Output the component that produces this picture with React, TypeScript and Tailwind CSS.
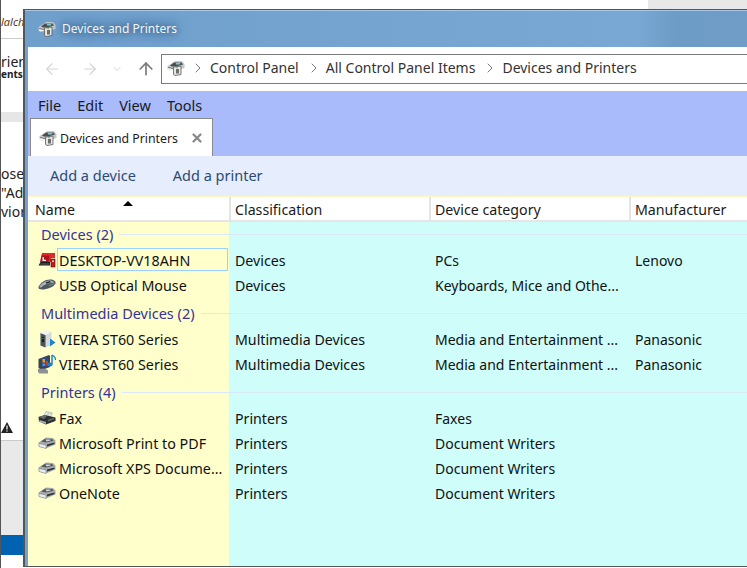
import { ArrowLeft, ArrowRight, ArrowUp, ChevronDown, ChevronRight, X } from "lucide-react";
import type { ReactNode } from "react";

const font = { fontFamily: '"Noto Sans", "Open Sans", sans-serif' };

function DevicesIcon({ className }: { className?: string }) {
  return (
    <svg viewBox="0 0 18 16" className={className}>
      <path d="M0.5 6 L6 2.5 L8 1 L15 1 L17.5 4 L17.5 8 L14 9 L6 10 L2 10.5 L0.5 9 Z" fill="#c4c8ca" />
      <path d="M3 5.5 L7 2.5 L14.5 2.5 L16 4.5 L9 6.5 L5 6.5 Z" fill="#4a4e51" />
      <path d="M8.5 2.8 L13 2.8 L13.5 4.2 L9.5 4.8 Z" fill="#7fc6cc" />
      <path d="M1 7.5 L6 8.5 L6 10 L2 10.5 L1 9.5 Z" fill="#f0f1f1" />
      <path d="M1 7.5 L6 8.5" stroke="#55595c" strokeWidth="0.8" />
      <path d="M6.5 7 L14 6 L14 14.5 L8 15.5 L6.5 14.5 Z" fill="#e8e7dc" stroke="#55595c" strokeWidth="0.8" />
      <rect x="9" y="9" width="3" height="4.5" fill="#6a6e70" />
      <rect x="9.3" y="7.2" width="1.6" height="1" fill="#59a85c" />
    </svg>
  );
}

function LaptopIcon() {
  return (
    <svg viewBox="0 0 18 16" className="w-[18px] h-4">
      <path d="M4 1 L17 1 L17 6 L13 6 L13 10 L2 10 Z" fill="#e02a30" />
      <path d="M3.5 3.5 L11.5 3.5 L10.5 10 L2.5 10 Z" fill="#a8141a" />
      <path d="M5.2 5 L5.2 8.4 L8 8.4" stroke="#fff" strokeWidth="1.4" fill="none" />
      <path d="M0.5 13.5 L2.5 10 L12 10 L12 13.5 Z" fill="#1e1e22" />
      <path d="M2.5 12 L11 12" stroke="#77777c" strokeWidth="0.7" />
      <rect x="13" y="7" width="4" height="8" fill="#c9181f" stroke="#5c0d10" strokeWidth="0.6" />
      <rect x="14" y="8.5" width="2" height="1.5" fill="#f6d5d5" />
    </svg>
  );
}

function MouseIcon() {
  return (
    <svg viewBox="0 0 18 11" className="w-[18px] h-[11px]">
      <path d="M0.5 8 C2 4 7 0.5 12 0.5 C16 0.5 18 2.5 17.5 4.5 C16 8 9 10.5 4 10.5 C2 10.5 0 9.8 0.5 8 Z" fill="#4f585f" />
      <path d="M1.5 7.5 C3.5 4 8 1.5 12 1.5 C14.5 1.5 16 2.5 16 3.8 C12 3.5 6 5.5 3 8.5 C2 8.7 1.5 8.2 1.5 7.5 Z" fill="#a9b4bb" />
      <path d="M8 4 L12.5 2.6" stroke="#23282c" strokeWidth="1.5" />
      <path d="M11 6.5 C13 6 15 5.3 16.5 4.3" stroke="#87929a" strokeWidth="0.9" fill="none" />
    </svg>
  );
}

function MediaServerIcon() {
  return (
    <svg viewBox="0 0 18 18" className="w-[18px] h-[18px]">
      <path d="M2.5 3 L8 0.5 L13.5 2 L13.5 15 L7 17.5 L2.5 15.5 Z" fill="#d6d9da" />
      <path d="M2.5 3 L7.5 5 L7.5 17.5 L2.5 15.5 Z" fill="#4c5154" />
      <path d="M2.5 3 L8 0.5 L13.5 2 L7.5 5 Z" fill="#f2f3f3" />
      <rect x="4" y="7" width="2" height="5" fill="#16181a" />
      <rect x="4.4" y="8" width="1" height="1.2" fill="#55c060" />
      <path d="M12 8.5 L17.5 12.5 L12 16.5 Z" fill="#1c84d8" />
    </svg>
  );
}

function MediaPlayerIcon() {
  return (
    <svg viewBox="0 0 20 20" className="w-5 h-5">
      <path d="M1.5 5 L12 1 L13 2 L13 13 L5 16 L1.5 14 Z" fill="#3f4346" />
      <rect x="4.5" y="4" width="7" height="9" fill="#2b4a86" />
      <rect x="5.5" y="5" width="2.5" height="3.5" fill="#e29a22" />
      <rect x="8.5" y="7" width="2.5" height="4.5" fill="#c2402c" />
      <rect x="5.5" y="9.5" width="2.5" height="2.5" fill="#4f9ad8" />
      <path d="M1 15 L8 14.5 L11 16.5 L11 19.5 L2.5 19.5 L1 18 Z" fill="#8c9194" />
      <path d="M15 1 L15 10" stroke="#1681d6" strokeWidth="1.5" />
      <path d="M15 1 C17 2 18.5 3.5 18.5 6" stroke="#1681d6" strokeWidth="1.3" fill="none" />
      <ellipse cx="13" cy="10.5" rx="2.6" ry="2" fill="#1681d6" />
    </svg>
  );
}

function FaxIcon() {
  return (
    <svg viewBox="0 0 18 14" className="w-[18px] h-[14px]">
      <path d="M8 0.5 L14.5 2 L12 6.5 L6 5 Z" fill="#f6f7f7" stroke="#7d8184" strokeWidth="0.5" />
      <path d="M9 2 L13 3 M8.4 3.2 L12 4.1" stroke="#9ba0a3" strokeWidth="0.5" />
      <path d="M0.5 6 L7 4 L17.5 6.5 L17.5 10 L8 13.5 L1 10.5 Z" fill="#2b3033" />
      <path d="M0.5 6 L7 4 L9 5 L6 8 Z" fill="#686d70" />
      <path d="M1.5 9 L8 11 L8 13 L1.5 10.8 Z" fill="#aab0b3" />
      <path d="M10 8.5 L16 6.8 L16 8.5 L10 10.5 Z" fill="#5b6164" />
    </svg>
  );
}

function PrinterIcon() {
  return (
    <svg viewBox="0 0 18 12" className="w-[18px] h-3">
      <path d="M0.5 5.5 L6 2 L8 0.5 L15 1 L17.5 3.5 L17.5 7.5 L8 11.5 L1 9.5 Z" fill="#a6abae" />
      <path d="M3 4.5 L7 1.8 L14 2 L15.5 3.8 L8 5.5 Z" fill="#53585b" />
      <path d="M7.5 2.4 L12.5 2.5 L12.5 3.6 L8.5 4.4 Z" fill="#d5d9da" />
      <path d="M1 6.5 L8 8 L8 11.5 L1 9.5 Z" fill="#eceded" stroke="#6b7073" strokeWidth="0.5" />
      <path d="M9 7.5 L16.5 5.5 L16.5 7 L9 9.5 Z" fill="#303336" />
    </svg>
  );
}

function GroupRow({ label, top }: { label: string; top: string }) {
  return (
    <div className={top}>
      <div className="h-[26px] flex items-center pl-[13px] text-[#33339c]">
        <span className="whitespace-nowrap">{label}</span>
        <div className="flex-1 h-px bg-[#dbe8f8] ml-[6px]" />
      </div>
    </div>
  );
}

function ItemRow({
  icon,
  name,
  cls,
  cat,
  maker,
  focus,
}: {
  icon: ReactNode;
  name: string;
  cls: string;
  cat?: string;
  maker?: string;
  focus?: boolean;
}) {
  return (
    <div className="h-[25px] grid grid-cols-[201px_200px_200px_1fr] items-center text-[#111]">
      <div className="flex items-center pl-[9px] h-full text-[14.3px]">
        <div className="w-5 flex justify-center shrink-0">{icon}</div>
        <div
          className={
            focus
              ? "w-[171px] h-[23px] border border-[#99d1ff] pl-[1px] pt-[2px] flex items-center whitespace-nowrap"
              : "ml-[2px] pt-[2px] whitespace-nowrap"
          }
        >
          {name}
        </div>
      </div>
      <div className="pl-[6px] pt-[2px] text-[14.2px]">{cls}</div>
      <div className="pl-[6px] pt-[2px] whitespace-nowrap text-[14px]">{cat}</div>
      <div className="pl-[6px] pt-[2px] text-[14px]">{maker}</div>
    </div>
  );
}

function BackgroundPage() {
  return (
    <div className="w-[23px] shrink-0 h-full flex flex-col bg-white border-l border-[#555] overflow-hidden text-[#222] whitespace-nowrap">
      <div className="h-[38px] pt-[12px] text-[11px] italic text-[#5a3a20]">lalchi</div>
      <div className="h-[3px] border-t border-[#ccc]" />
      <div className="pt-[15px] h-[27px] text-[14px] leading-[12px]">rienc</div>
      <div className="h-[13px] text-[10px] leading-[13px] font-bold">ents a</div>
      <div className="h-[31px]" />
      <div className="h-[10px] bg-[#e6e6e6]" />
      <div className="h-[42px]" />
      <div className="h-[19px] text-[14px] leading-[19px]">ose</div>
      <div className="h-[19px] text-[14px] leading-[19px]">{'"Ad'}</div>
      <div className="h-[19px] text-[14px] leading-[19px]">vior</div>
      <div className="h-[212px] flex flex-col justify-end items-start">
        <svg viewBox="0 0 12 11" className="w-3 h-[11px]">
          <path d="M6 0 L12 11 L0 11 Z" fill="#222" />
          <rect x="5.4" y="3.5" width="1.2" height="4" fill="#fff" />
          <rect x="5.4" y="8.4" width="1.2" height="1.2" fill="#fff" />
        </svg>
      </div>
      <div className="h-[7px]" />
      <div className="h-px bg-[#c9c9c9]" />
      <div className="h-[94px] bg-[#e9e9e9]" />
      <div className="h-5 bg-[#0063b1]" />
      <div className="flex-1 bg-white" />
    </div>
  );
}

export default function App() {
  return (
    <div className="w-[747px] h-[568px] flex bg-white overflow-hidden text-[14.5px] leading-5" style={font}>
      <BackgroundPage />
      <div className="flex-1 min-w-0 flex flex-col">
        <div className="h-[9px] shrink-0 flex">
          <div className="w-[625px] bg-white" />
          <div className="flex-1 bg-[#e8e8e8]" />
        </div>
        <div className="flex-1 min-h-0 flex flex-col border-l-2 border-t border-b border-[#555] bg-[#74a3cf] mb-[1px]">
          <div className="h-[37px] shrink-0 flex items-center bg-[linear-gradient(to_right,#6f9fcb,#7aa8d4_85%,#6d9cc6_90%,#6f9dc8)] border-t border-[#a9c8e4]">
            <DevicesIcon className="w-[18px] h-4 ml-[13px]" />
            <span className="ml-[6px] text-[12px] text-[#f2f6fa] [text-shadow:0_0_5px_#3f668c,0_0_9px_#4a7299,0_0_12px_#4a7299]">
              Devices and Printers
            </span>
          </div>
          <div className="flex-1 min-h-0 flex flex-col ml-[3px]">
            <div className="h-[44px] shrink-0 bg-white flex items-center text-[#333] text-[14px]">
              <ArrowLeft className="w-[18px] h-[18px] ml-[15px] text-[#d5d5d5]" strokeWidth={1.5} />
              <ArrowRight className="w-[18px] h-[18px] ml-[20px] text-[#d5d5d5]" strokeWidth={1.5} />
              <ChevronDown className="w-3 h-3 ml-[12px] text-[#d5d5d5]" strokeWidth={2} />
              <ArrowUp className="w-5 h-5 ml-[13px] text-[#7a7a7a]" strokeWidth={2} />
              <div className="ml-[5px] flex-1 h-[30px] border-y border-l border-[#7a7a7a] flex items-center pb-[2px]">
                <DevicesIcon className="w-[18px] h-4 ml-[5px]" />
                <ChevronRight className="w-4 h-4 ml-[5px] text-[#777]" strokeWidth={1.5} />
                <span className="ml-[4px]">Control Panel</span>
                <ChevronRight className="w-4 h-4 ml-[7px] text-[#777]" strokeWidth={1.5} />
                <span className="ml-[4px]">All Control Panel Items</span>
                <ChevronRight className="w-4 h-4 ml-[7px] text-[#777]" strokeWidth={1.5} />
                <span className="ml-[4px]">Devices and Printers</span>
              </div>
            </div>
            <div className="h-[65px] shrink-0 bg-[#a9bbfb] flex flex-col text-[#1a1a1a]">
              <div className="h-[27px] flex items-center pl-[10px] gap-4">
                <span>File</span>
                <span>Edit</span>
                <span>View</span>
                <span>Tools</span>
              </div>
              <div className="h-[38px] ml-[2px] w-[183px] bg-white border-t border-x border-[#8a8a8a] flex items-center text-[12.3px]">
                <DevicesIcon className="w-[18px] h-4 ml-[8px]" />
                <span className="ml-[3px] pt-[2px] flex-1 whitespace-nowrap">Devices and Printers</span>
                <X className="w-[14px] h-[14px] mr-[8px] text-[#8a8a8a]" strokeWidth={4} />
              </div>
            </div>
            <div className="h-[40px] shrink-0 bg-[#e6edfd] flex items-center pl-[22px] gap-[37px] pb-[2px] text-[#2d4a73]">
              <span>Add a device</span>
              <span>Add a printer</span>
            </div>
            <div className="relative h-[26px] shrink-0 grid grid-cols-[201px_200px_200px_1fr] bg-white border-t border-b-2 border-t-[#fdf7c4] border-b-[#e5e5e5] text-[#1a1a1a] text-[14.2px]">
              <div className="pl-[7px] pt-[2px] flex items-center">Name</div>
              <div className="pl-[4px] pt-[2px] flex items-center border-l-2 border-[#e5e5e5]">Classification</div>
              <div className="pl-[4px] pt-[2px] flex items-center border-l-2 border-[#e5e5e5]">Device category</div>
              <div className="pl-[4px] pt-[2px] flex items-center border-l-2 border-[#e5e5e5]">Manufacturer</div>
              <div className="absolute left-[95px] top-[4px] w-0 h-0 border-x-[5px] border-x-transparent border-b-[5px] border-b-black" />
            </div>
            <div className="flex-1 min-h-0 overflow-hidden bg-[linear-gradient(to_right,#ffffcc_201px,#cefdfa_201px)]">
              <GroupRow label="Devices (2)" top="-mt-px" />
              <ItemRow icon={<LaptopIcon />} name="DESKTOP-VV18AHN" cls="Devices" cat="PCs" maker="Lenovo" focus />
              <ItemRow icon={<MouseIcon />} name="USB Optical Mouse" cls="Devices" cat="Keyboards, Mice and Othe..." />
              <GroupRow label="Multimedia Devices (2)" top="pt-[3px]" />
              <ItemRow icon={<MediaServerIcon />} name="VIERA ST60 Series" cls="Multimedia Devices" cat="Media and Entertainment ..." maker="Panasonic" />
              <ItemRow icon={<MediaPlayerIcon />} name="VIERA ST60 Series" cls="Multimedia Devices" cat="Media and Entertainment ..." maker="Panasonic" />
              <GroupRow label="Printers (4)" top="pt-[3px]" />
              <ItemRow icon={<FaxIcon />} name="Fax" cls="Printers" cat="Faxes" />
              <ItemRow icon={<PrinterIcon />} name="Microsoft Print to PDF" cls="Printers" cat="Document Writers" />
              <ItemRow icon={<PrinterIcon />} name="Microsoft XPS Docume..." cls="Printers" cat="Document Writers" />
              <ItemRow icon={<PrinterIcon />} name="OneNote" cls="Printers" cat="Document Writers" />
            </div>
          </div>
        </div>
      </div>
    </div>
  );
}
